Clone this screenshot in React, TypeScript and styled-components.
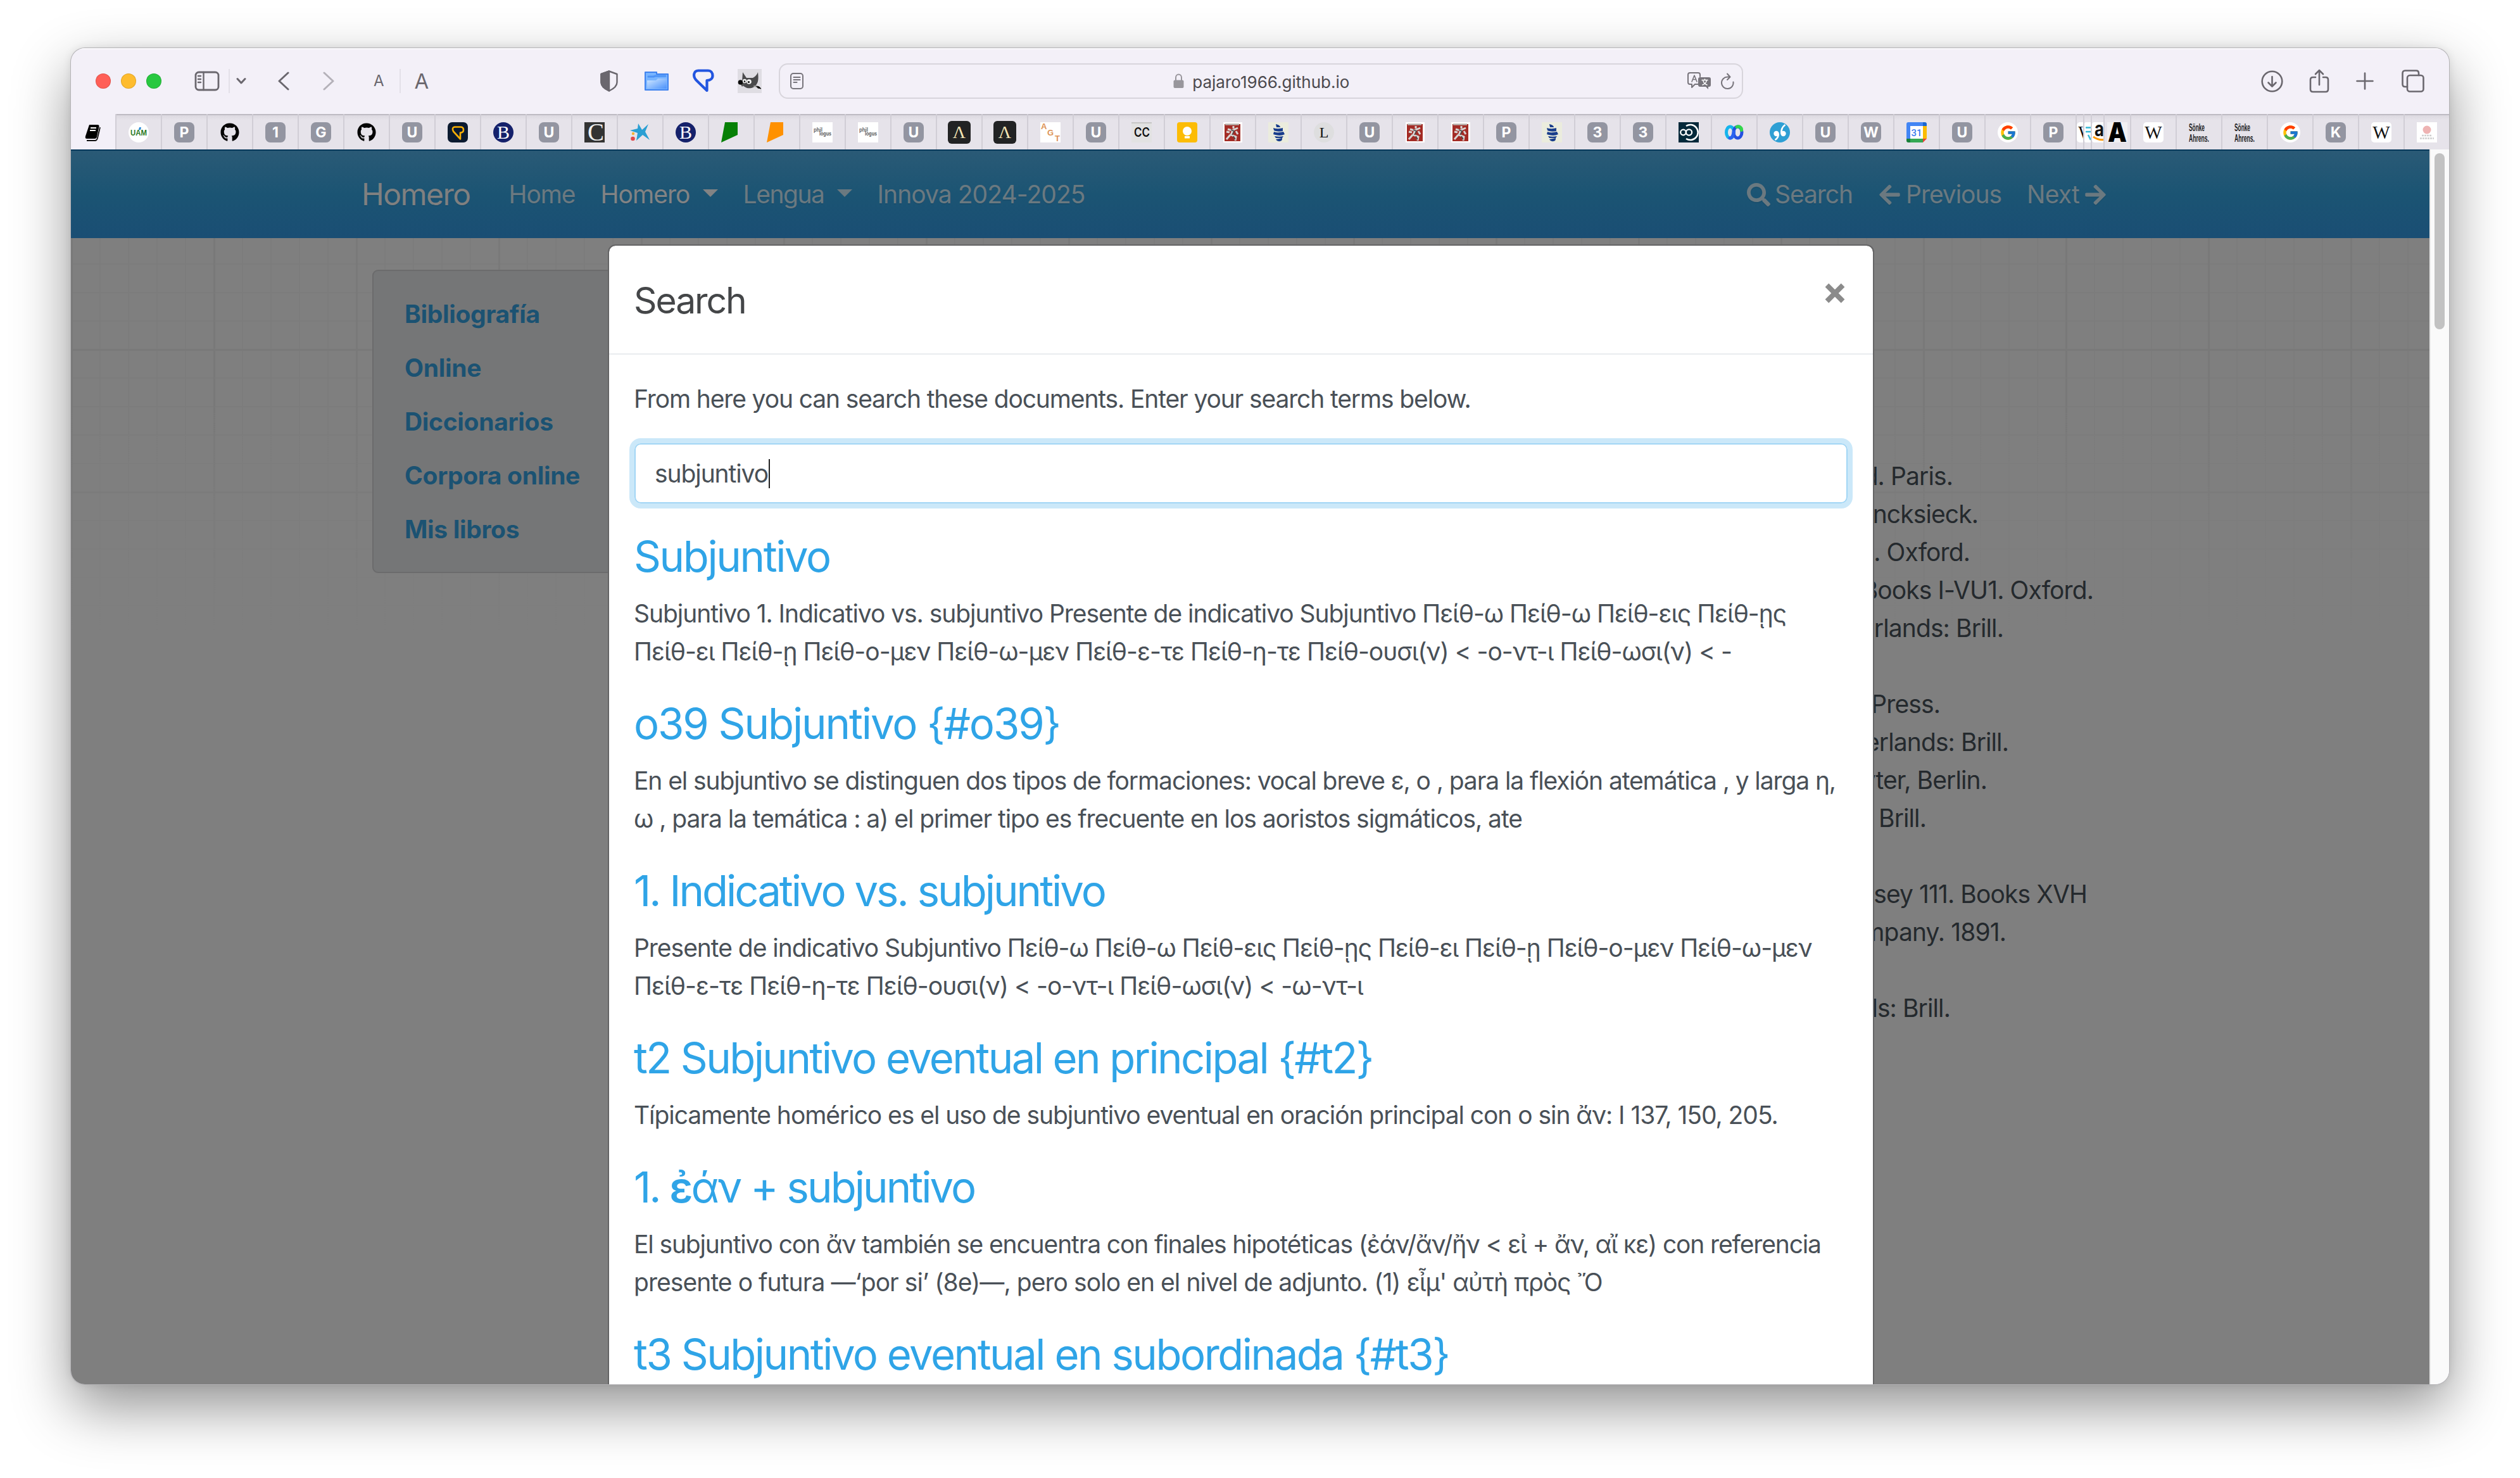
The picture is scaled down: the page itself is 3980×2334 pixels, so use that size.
import React from "react";
import styled, { createGlobalStyle } from "styled-components";
import { FaSearch, FaArrowLeft, FaArrowRight, FaGithub } from "react-icons/fa";
import { FcGoogle } from "react-icons/fc";

const GlobalStyle = createGlobalStyle`
  * { box-sizing: border-box; }
  html, body { margin: 0; padding: 0; background: #fff; }
  body { font-family: Inter, "Noto Sans", "Liberation Sans", sans-serif; overflow: hidden; }
`;

const Desktop = styled.main`
  width: 3980px;
  height: 2334px;
  padding: 76px 112px 0;
  overflow: hidden;
  background: #fff;
`;

const Window = styled.section`
  width: 3756px;
  height: 2110px;
  border-radius: 22px;
  overflow: hidden;
  display: flex;
  flex-direction: column;
  background: #f3f0f8;
  box-shadow: 0 0 0 1px #b4b3b6, 0 36px 90px rgba(0, 0, 0, 0.43), 0 0 14px rgba(0, 0, 0, 0.1);
`;

/* ---------- toolbar ---------- */
const Toolbar = styled.header`
  height: 104px;
  flex: none;
  display: flex;
  align-items: center;
  padding: 0 39px 2px 39px;
  border-top: 2px solid #fbfafd;
  color: #6a676e;
`;
const Light = styled.i<{ $c: string }>`
  width: 24px;
  height: 24px;
  border-radius: 50%;
  margin-right: 16px;
  background: ${(p) => p.$c};
  box-shadow: inset 0 0 0 1px rgba(0, 0, 0, 0.12);
`;
const Rule = styled.i<{ $l: number; $r: number }>`
  width: 2px;
  height: 38px;
  background: #e3e0e8;
  margin: 0 ${(p) => p.$r}px 0 ${(p) => p.$l}px;
`;
const Glyph = styled.svg<{ $w: number; $h: number; $l?: number; $t?: number }>`
  display: block;
  flex: none;
  width: ${(p) => p.$w}px;
  height: ${(p) => p.$h}px;
  margin-left: ${(p) => p.$l ?? 0}px;
  margin-top: ${(p) => p.$t ?? 0}px;
  fill: none;
  stroke: currentColor;
  stroke-linecap: round;
  stroke-linejoin: round;
`;
const BlueGlyph = styled(Glyph)`
  stroke: #2255e0;
`;
const Letter = styled.span<{ $s: number; $l: number }>`
  font-size: ${(p) => p.$s}px;
  line-height: 40px;
  margin-left: ${(p) => p.$l}px;
  color: #6a676e;
`;
const AddressBar = styled.div`
  width: 1523px;
  height: 56px;
  margin-left: 27px;
  border: 2px solid #d8d5dc;
  border-radius: 14px;
  display: flex;
  align-items: center;
  padding: 0 11px 0 16px;
`;
const Address = styled.div`
  flex: 1;
  display: flex;
  align-items: center;
  justify-content: center;
  gap: 13px;
  padding-left: 50px;
  color: #4b494e;
  font-size: 26px;
  line-height: 36px;
`;
const AddressText = styled.span`
  padding-top: 3px;
`;
const Trailing = styled.div`
  margin-left: auto;
  display: flex;
  align-items: center;
`;

/* ---------- favourites tab strip ---------- */
const TabStrip = styled.nav`
  height: 56px;
  flex: none;
  display: flex;
  background: #e6e3ea;
`;
const Tab = styled.div<{ $w?: number; $active?: boolean }>`
  width: ${(p) => p.$w ?? 72}px;
  flex: none;
  overflow: hidden;
  display: flex;
  align-items: center;
  justify-content: ${(p) => (p.$w && p.$w < 30 ? "flex-start" : "center")};
  padding-top: 2px;
  border-left: ${(p) => (p.$active ? 0 : 2)}px solid #d1ced6;
  background: ${(p) => (p.$active ? "#f3f0f8" : "linear-gradient(#bebbc3 0 2px, #dcd9e0 2px, #e6e3ea 10px)")};
`;
const Tile = styled.span<{ $bg: string; $fg?: string; $r?: number; $s?: number; $serif?: boolean; $box?: number; $wt?: number }>`
  width: ${(p) => p.$box ?? 32}px;
  height: ${(p) => p.$box ?? 32}px;
  flex: none;
  display: flex;
  align-items: center;
  justify-content: center;
  overflow: hidden;
  border-radius: ${(p) => p.$r ?? 8}px;
  background: ${(p) => p.$bg};
  color: ${(p) => p.$fg ?? "#fff"};
  font-family: ${(p) => (p.$serif ? '"Liberation Serif", serif' : 'Inter, "Liberation Sans", sans-serif')};
  font-size: ${(p) => p.$s ?? 23}px;
  font-weight: ${(p) => p.$wt ?? 700};
  line-height: 1;
`;
const Icon = styled.svg.attrs({ viewBox: "0 0 32 32" })`
  display: block;
  flex: none;
  width: 32px;
  height: 32px;
`;

/* ---------- page ---------- */
const Viewport = styled.div`
  flex: 1;
  min-height: 0;
  display: flex;
`;
const Page = styled.div`
  position: relative;
  width: 3725px;
  height: 1950px;
  overflow: hidden;
  background: #7f7f7f;
`;
const GridPaper = styled.div`
  position: absolute;
  inset: 140px 0 auto 0;
  height: 620px;
  background-image:
    linear-gradient(90deg, #797979 0 3px, transparent 3px),
    linear-gradient(#797979 0 3px, transparent 3px),
    linear-gradient(90deg, #7c7c7c 0 2px, transparent 2px),
    linear-gradient(#7c7c7c 0 2px, transparent 2px);
  background-size: 225px 225px, 225px 225px, 45px 45px, 45px 45px;
  background-position: 225px 0, 0 175px, 0 0, 0 -5px;
  mask-image: linear-gradient(#000 40%, transparent);
`;
const Scrollbar = styled.div`
  flex: 1;
  background: #fafafa;
  border-left: 2px solid #e8e8e8;
  padding: 6px 0 0 6px;
`;
const Thumb = styled.div`
  width: 16px;
  height: 278px;
  border-radius: 8px;
  background: #c2c2c2;
`;
const Navbar = styled.nav`
  position: relative;
  height: 140px;
  display: flex;
  align-items: center;
  padding: 0 509px 0 459px;
  border-top: 2px solid #06385a;
  background: linear-gradient(#2a5a76, #1b5473 50%, #1a4e74);
  color: #6b7980;
  font-size: 39px;
  line-height: 60px;
  text-shadow: 0 2px 0 rgba(0, 0, 0, 0.06);
  white-space: nowrap;
`;
const Brand = styled.span`
  font-size: 48px;
  color: #808080;
  margin-right: 61px;
  letter-spacing: -1.5px;
`;
const NavLink = styled.span<{ $on?: boolean; $ls: number }>`
  display: flex;
  align-items: center;
  margin-right: 40px;
  color: ${(p) => (p.$on ? "#828384" : "inherit")};
  letter-spacing: ${(p) => p.$ls}px;
`;
const Caret = styled.i`
  margin: -4px 0 0 20px;
  border: 12.5px solid transparent;
  border-top-color: currentColor;
  border-bottom: 0;
`;
const NavEnd = styled.div`
  margin-left: auto;
  display: flex;
  gap: 40px;
`;
const Action = styled.span<{ $ls: number }>`
  display: flex;
  align-items: center;
  gap: 7px;
  letter-spacing: ${(p) => p.$ls}px;
  svg { width: 37px; height: 37px; filter: drop-shadow(0 2px 0 rgba(0, 0, 0, 0.06)); }
`;
const Columns = styled.div`
  position: relative;
  display: flex;
  justify-content: space-between;
  padding: 0 517px 0 476px;
`;
const Toc = styled.aside`
  flex: none;
  width: 560px;
  height: 479px;
  margin-top: 50px;
  padding: 25px 49px;
  border: 2px solid #6b6b6c;
  border-radius: 9px;
  background: #757677;
  color: #1b5272;
  font-size: 39px;
  font-weight: 700;
  line-height: 85px;
`;
const TocItem = styled.div`
  letter-spacing: -0.32px;
`;
const References = styled.div`
  flex: none;
  margin-top: 346px;
  color: #24292d;
  font-size: 39px;
  line-height: 60px;
  text-align: right;
  letter-spacing: -0.9px;
`;
const Reference = styled.div<{ $end: number }>`
  height: 60px;
  white-space: nowrap;
  padding-right: ${(p) => 3320 - p.$end}px;
`;

/* ---------- modal ---------- */
const Modal = styled.div`
  position: absolute;
  left: 848px;
  top: 150px;
  width: 2000px;
  height: 1900px;
  border: 2px solid #656566;
  border-radius: 12px;
  background: #fff;
  background-clip: padding-box;
  color: #495057;
  font-size: 39px;
  line-height: 60px;
`;
const ModalHeader = styled.div`
  height: 172px;
  display: flex;
  justify-content: space-between;
  padding: 40px 44px 40px 39px;
  border-bottom: 2px solid #e9ecef;
`;
const ModalTitle = styled.h5`
  margin: 2px 0 0;
  color: #444648;
  font-size: 57px;
  font-weight: 400;
  line-height: 90px;
  letter-spacing: -2.1px;
`;
const ModalBody = styled.div`
  padding: 40px;
`;
const Line = styled.span<{ $ls: number }>`
  display: block;
  width: max-content;
  margin-left: -1px;
  white-space: pre;
  letter-spacing: ${(p) => p.$ls}px;
`;
const Field = styled.div`
  width: 1916px;
  height: 95px;
  margin: 40px 0;
  padding: 0 31px;
  border: 2px solid #a2d6f5;
  border-radius: 10px;
  box-shadow: 0 0 0 8px #cbe8f9;
  display: flex;
  align-items: center;
`;
const Cursor = styled.i`
  width: 2px;
  height: 46px;
  margin-left: 1px;
  background: #222;
`;
const Result = styled.article`
  margin-bottom: 40px;
`;
const ResultTitle = styled.h2<{ $ls: number }>`
  width: max-content;
  margin: 0 0 17px -1px;
  font-size: 67px;
  font-weight: 400;
  line-height: 87px;
  color: #2fa4e7;
  white-space: pre;
  letter-spacing: ${(p) => p.$ls}px;
  b { font-weight: 600; }
`;

const lt = (c: string) => <Tile $bg="#9395a1">{c}</Tile>;
const fitted = (t: string, x: number, y: number, w: number, s: number, fill: string, weight = 700, family = "Liberation Sans") => (
  <text x={x} y={y} textLength={w} lengthAdjust="spacingAndGlyphs" fontSize={s} fontWeight={weight} fontFamily={family} fill={fill}>{t}</text>
);
const github = <FaGithub size={30} color="#050505" />;
const britannica = <Tile $bg="#15216b" $r={16} $s={30} $serif $wt={400}>B</Tile>;
const phil = (
  <Icon>
    <rect width="32" height="32" fill="#fff" />
    {fitted("phil", 2, 15, 14, 9, "#666")}
    {fitted("logus", 11, 21, 19, 9, "#555")}
  </Icon>
);
const lambda = <Tile $bg="#222324" $fg="#f3e3b4" $box={36} $r={6} $s={28} $serif $wt={400}>Λ</Tile>;
const runner = (
  <Icon>
    <rect width="30" height="32" x="1" fill="#fff" />
    <rect x="3" y="3" width="25" height="27" fill="#a32b25" />
    <path d="M4 3.500h22" stroke="#b9b2ae" strokeWidth="2.500" />
    <path d="M17 6v4M8 11l7 2 9-4M16 13l-3 7 8 3-1 6M12 20l-6 7M6 15l5 1M21 14l3 5" stroke="#d8d4d2" strokeWidth="3" fill="none" />
    <path d="M13 12l5 2-3 6M17 22l3 5" stroke="#4b4a4a" strokeWidth="1.500" fill="none" />
  </Icon>
);
const ship = (
  <Icon>
    <rect width="32" height="32" fill="#ebecdd" />
    <path d="M12 3c5 1 7 3 7 5h-6zM8 9c6 2 11 1 15 0v5c-5 1-10 1-14-1zM9 15c5 2 10 1 15 0l2 4c-5 3-13 2-18 0zM10 22c5 1 9 1 14 0l-2 3H12zM12 27l10-2c1 6-7 7-10 2z" fill="#193d8c" />
  </Icon>
);
const wiki = <Tile $bg="#fff" $fg="#111" $r={5} $s={29} $serif $wt={400}>W</Tile>;
const google = <Tile $bg="#fff" $r={16}><FcGoogle size={27} /></Tile>;
const sonke = (
  <Icon>
    {fitted("Sönke", 0, 14, 25, 17, "#1d1d1f")}
    {fitted("Ahrens.", 0, 31, 32, 17, "#1d1d1f")}
  </Icon>
);
const slant = (c: string) => <Icon><path d="M6 0h20v20L0 32z" fill={c} /></Icon>;

const tabs: { w?: number; icon: React.ReactNode }[] = [
  {
    icon: (
      <Icon>
        <circle cx="16" cy="16" r="16" fill="#fff" />
        {fitted("UAM", 3, 21, 26, 12, "#2b7a25", 700)}
        <path d="M17 8l3 0-1 4-3 0z" fill="#2487d8" />
      </Icon>
    ),
  },
  { icon: lt("P") }, { icon: github }, { icon: lt("1") }, { icon: lt("G") }, { icon: github }, { icon: lt("U") },
  {
    icon: (
      <Icon>
        <rect width="32" height="32" rx="7" fill="#0b1a30" />
        <path d="M11 7.500h9q5 0 5 4.500t-5 4.500v10L9 14.500q-3-6 2-7z" fill="none" stroke="#f7ae05" strokeWidth="2.600" strokeLinejoin="round" />
      </Icon>
    ),
  },
  { icon: britannica }, { icon: lt("U") },
  {
    icon: (
      <Icon>
        <rect width="32" height="32" fill="#333" />
        {fitted("C", 5, 29, 26, 40, "#eee", 400, "Liberation Serif")}
      </Icon>
    ),
  },
  {
    icon: (
      <Icon>
        <path d="M13 2l6 10 10-9-5 12 7 13-11-8-10 9 2-12-12-4 12-3z" fill="#2a9fd3" />
        <circle cx="5" cy="18" r="2.200" fill="#f5b335" /><circle cx="4.500" cy="26" r="3.300" fill="#e0494a" />
      </Icon>
    ),
  },
  { icon: britannica }, { icon: slant("#068006") }, { icon: slant("#ff9100") }, { icon: phil }, { icon: phil }, { icon: lt("U") },
  { icon: lambda }, { icon: lambda },
  {
    icon: (
      <Icon>
        <rect width="32" height="32" fill="#fff" />
        <g fill="#dd9457" fontFamily="Liberation Sans" fontWeight="700" fontSize="13">
          <text x="1" y="11">A</text><text x="11" y="21">G</text><text x="23" y="30">T</text>
        </g>
      </Icon>
    ),
  },
  { icon: lt("U") },
  {
    icon: (
      <Icon>
        <rect width="32" height="32" fill="#e2e2e2" /><rect width="32" height="2" fill="#c6c6c6" />
        {fitted("CC", 4, 23, 25, 20, "#111", 600, "Inter")}
      </Icon>
    ),
  },
  {
    icon: (
      <Icon>
        <rect width="32" height="32" rx="4" fill="#fcbc05" />
        <circle cx="16" cy="14" r="7" fill="#fff" /><path d="M12 17h8v3h-8zM12 22h8v3.500h-8z" fill="#fff" />
      </Icon>
    ),
  },
  { icon: runner }, { icon: ship },
  { icon: <Tile $bg="#dededf" $fg="#111" $r={16} $s={24} $serif $wt={400}>L</Tile> },
  { icon: lt("U") }, { icon: runner }, { icon: runner }, { icon: lt("P") }, { icon: ship }, { icon: lt("3") }, { icon: lt("3") },
  {
    icon: (
      <Icon>
        <rect width="32" height="32" fill="#04293a" />
        <path d="M12 6a12 12 0 1 1 0 20" fill="none" stroke="#fff" strokeWidth="2.500" />
        <circle cx="7.500" cy="16" r="4.300" fill="none" stroke="#fff" strokeWidth="2.300" />
        <circle cx="16.500" cy="16" r="4.600" fill="none" stroke="#fff" strokeWidth="2.300" />
      </Icon>
    ),
  },
  {
    icon: (
      <Icon>
        <ellipse cx="9.500" cy="16" rx="6" ry="9" fill="none" stroke="#16b4ec" strokeWidth="5" />
        <ellipse cx="21.500" cy="16" rx="6.500" ry="9" fill="none" stroke="#2450e0" strokeWidth="5" />
        <path d="M9 25c5 0 5-6 6.500-10" fill="none" stroke="#2a62f0" strokeWidth="5" strokeLinecap="round" />
        <path d="M20 7.500c4-2 8 1 7.500 5" fill="none" stroke="#33d64c" strokeWidth="5" strokeLinecap="round" />
      </Icon>
    ),
  },
  {
    icon: (
      <Icon>
        <circle cx="16" cy="16" r="16" fill="#2e9fd4" />
        <circle cx="10.500" cy="18" r="4.200" fill="#fff" /><circle cx="21.500" cy="18" r="4.200" fill="#fff" />
        <path d="M13.500 18q1 6-5 10M18.500 18q-1-9 6-14" fill="none" stroke="#fff" strokeWidth="2.600" />
      </Icon>
    ),
  },
  { icon: lt("U") }, { icon: lt("W") },
  {
    icon: (
      <Icon>
        <path d="M3 0h23v6H6v20H0V3q0-3 3-3z" fill="#4285f4" /><path d="M26 0h3q3 0 3 3v3h-6z" fill="#1967d2" />
        <path d="M26 6h6v20h-6z" fill="#fbbc04" /><path d="M6 26h20v6H6z" fill="#34a853" />
        <path d="M0 26h6v6H3q-3 0-3-3z" fill="#188038" /><path d="M26 26h6l-6 6z" fill="#ea4335" />
        <path d="M6 6h20v20H6z" fill="#fff" />
        <text x="16" y="21.500" textAnchor="middle" fontFamily="Roboto" fontWeight="500" fontSize="15" fill="#3b7ded">31</text>
      </Icon>
    ),
  },
  { icon: lt("U") }, { icon: google }, { icon: lt("P") },
  { w: 12, icon: wiki },
  {
    w: 12,
    icon: (
      <Icon>
        <rect width="32" height="32" rx="3" fill="#fff" />
        <path d="M2 8.500h22M2 15h22M6 20l4 8" stroke="#37b9d6" strokeWidth="2.500" />
      </Icon>
    ),
  },
  {
    w: 20,
    icon: (
      <Icon>
        <rect width="32" height="32" rx="4" fill="#fff" />
        {fitted("a", 4, 22, 15, 33, "#111", 700, "Inter")}
        <path d="M2 23q13 9 26 1" fill="none" stroke="#ff9a0a" strokeWidth="3" />
      </Icon>
    ),
  },
  {
    w: 42,
    icon: (
      <Icon>
        <rect width="32" height="32" fill="#f1f0f3" />
        {fitted("A", 1, 31, 30, 42, "#000", 900, "Inter")}
      </Icon>
    ),
  },
  { icon: wiki }, { icon: sonke }, { icon: sonke }, { icon: google }, { icon: lt("K") }, { icon: wiki },
  {
    icon: (
      <Icon>
        <rect width="32" height="32" fill="#fff" /><circle cx="16" cy="12" r="6.500" fill="#eeb3b3" />
        <path d="M8 21h16M5 25.500h22" stroke="#cfcfcf" strokeWidth="2.500" strokeDasharray="3 1" />
      </Icon>
    ),
  },
];

const results: { title: React.ReactNode; ls: number; lines: [string, number][] }[] = [
  { title: "Subjuntivo", ls: -2.4, lines: [
    ["Subjuntivo 1. Indicativo vs. subjuntivo Presente de indicativo Subjuntivo Πείθ-ω Πείθ-ω Πείθ-εις Πείθ-ῃς", -1.05],
    ["Πείθ-ει Πείθ-ῃ Πείθ-ο-μεν Πείθ-ω-μεν Πείθ-ε-τε Πείθ-η-τε Πείθ-ουσι(ν) < -ο-ντ-ι Πείθ-ωσι(ν) < -", -0.995]] },
  { title: "o39 Subjuntivo {#o39}", ls: -2.1, lines: [
    ["En el subjuntivo se distinguen dos tipos de formaciones: vocal breve ε, ο , para la flexión atemática , y larga η,", -1.105],
    ["ω , para la temática : a) el primer tipo es frecuente en los aoristos sigmáticos, ate", -1.06]] },
  { title: "1. Indicativo vs. subjuntivo", ls: -2.99, lines: [
    ["Presente de indicativo Subjuntivo Πείθ-ω Πείθ-ω Πείθ-εις Πείθ-ῃς Πείθ-ει Πείθ-ῃ Πείθ-ο-μεν Πείθ-ω-μεν", -1.035],
    ["Πείθ-ε-τε Πείθ-η-τε Πείθ-ουσι(ν) < -ο-ντ-ι Πείθ-ωσι(ν) < -ω-ντ-ι", -0.95]] },
  { title: "t2 Subjuntivo eventual en principal {#t2}", ls: -2.59, lines: [
    ["Típicamente homérico es el uso de subjuntivo eventual en oración principal con o sin ἄν: I 137, 150, 205.", -1.055]] },
  { title: <>1. <b>ἐ</b>άν + subjuntivo</>, ls: -2.95, lines: [
    ["El subjuntivo con ἄν también se encuentra con finales hipotéticas (ἐάν/ἄν/ἤν < εἰ + ἄν, αἴ κε) con referencia", -1.14],
    ["presente o futura —‘por si’ (8e)—, pero solo en el nivel de adjunto. (1) εἶμ' αὐτὴ πρὸς Ὄ", -0.94]] },
  { title: "t3 Subjuntivo eventual en subordinada {#t3}", ls: -2.49, lines: [] },
];

const toc = ["Bibliografía", "Online", "Diccionarios", "Corpora online", "Mis libros"];

const references: [string, number][] = [
  ["d. Paris.", 3084], ["incksieck.", 3124], ["l. Oxford.", 3111], ["Books I-VU1. Oxford.", 3306], ["erlands: Brill.", 3164], ["", 3320],
  ["Press.", 3064], ["erlands: Brill.", 3172], ["yter, Berlin.", 3138], ["Brill.", 3042], ["", 3320],
  ["sey 111. Books XVH", 3296], ["mpany. 1891.", 3168], ["", 3320], ["ds: Brill.", 3080],
];

export default function App() {
  return (
    <Desktop>
      <GlobalStyle />
      <Window>
        <Toolbar>
          <Light $c="#ff5f57" /><Light $c="#febc2e" /><Light $c="#28c840" />
          <Glyph $w={40} $h={32} $l={36} viewBox="0 0 40 32" strokeWidth="2.800">
            <rect x="2" y="2" width="36" height="28" rx="5" /><path d="M14.500 2v28M6 8h4M6 13h4M6 18h4" strokeWidth="2.400" />
          </Glyph>
          <Rule $l={14} $r={10} />
          <Glyph $w={16} $h={12} viewBox="0 0 16 12" strokeWidth="3"><path d="M2 2.500l6 6.500 6-6.500" /></Glyph>
          <Glyph $w={18} $h={30} $l={50} viewBox="0 0 18 30" strokeWidth="3"><path d="M16 2L2 15l14 13" /></Glyph>
          <Glyph $w={18} $h={30} $l={53} viewBox="0 0 18 30" strokeWidth="3" opacity=".45"><path d="M2 2l14 13L2 28" /></Glyph>
          <Letter $s={24} $l={62}>A</Letter>
          <Rule $l={24} $r={0} />
          <Letter $s={33} $l={22}>A</Letter>
          <Glyph $w={28} $h={34} $l={271} viewBox="0 0 28 34" strokeWidth="2.400">
            <path d="M14 1.500L26.500 6v13c0 6-6 10.500-12.500 13.500C7.500 29.500 1.500 25 1.500 19V6z" />
            <path d="M14 1.500v31C7.500 29.500 1.500 25 1.500 19V6z" fill="currentColor" />
          </Glyph>
          <Glyph $w={38} $h={30} $l={42} viewBox="0 0 38 30" strokeWidth="2">
            <defs><linearGradient id="fold" x1="0" y1="0" x2="1" y2="1"><stop offset="0" stopColor="#d3e9ff" /><stop offset="1" stopColor="#4b92fb" /></linearGradient></defs>
            <path d="M1 1h18v3h18v25H1z" fill="#79b5ff" stroke="#3f82ee" />
            <path d="M4 14h14l3-3h14v16H4z" fill="url(#fold)" stroke="none" /><path d="M6 8h8l3-1h16" stroke="#4d93f6" strokeWidth="3" />
          </Glyph>
          <BlueGlyph $w={34} $h={38} $l={38} viewBox="0 0 34 38" strokeWidth="4.200">
            <path d="M9 2.500h15c5 0 7.500 3.500 7.500 8S28 18 22.500 18V34L6.500 18.500C-1 11 2 2.500 9 2.500z" />
          </BlueGlyph>
          <Glyph $w={38} $h={38} $l={37} viewBox="0 0 38 38">
            <path d="M0 0h38v38H0z" fill="#dfdde3" stroke="none" />
            <path d="M8 5l6 9h10c4-2 7-6 8-9 1 8 1 15-2 19-4 7-14 8-19 4-4-2-5-5-4-8z" fill="#4a4a4c" stroke="none" />
            <path d="M2 19l10 4-5 5z" fill="#555" stroke="none" />
            <circle cx="4.500" cy="21" r="3.800" fill="#0c0c0c" stroke="none" />
            <circle cx="11" cy="19" r="3.200" fill="#eee" stroke="none" /><circle cx="18" cy="20" r="3.800" fill="#f4f4f4" stroke="none" />
            <circle cx="11" cy="19.500" r="1.300" fill="#111" stroke="none" /><circle cx="17.500" cy="20.500" r="1.600" fill="#111" stroke="none" />
            <path d="M26 27l5 1" stroke="#999" strokeWidth="2" /><path d="M30 27l4 1 3 3-5-1z" fill="#111" stroke="#111" />
          </Glyph>
          <AddressBar>
            <Glyph $w={21} $h={26} viewBox="0 0 21 26" strokeWidth="2" color="#77747b">
              <rect x="1" y="1" width="19" height="24" rx="4" /><path d="M5.500 7h10M5.500 11h10M5.500 15h5" />
            </Glyph>
            <Address>
              <Glyph $w={17} $h={24} viewBox="0 0 17 24" color="#98969c" strokeWidth="2">
                <path d="M4 11V6.500a4.500 5 0 0 1 9 0V11" /><rect x="0.500" y="10.500" width="16" height="12.500" rx="2" fill="currentColor" stroke="none" />
              </Glyph>
              <AddressText>pajaro1966.github.io</AddressText>
            </Address>
            <Glyph $w={38} $h={28} viewBox="0 0 38 28" color="#77747b" strokeWidth="2">
              <path d="M17 19h-5l-5 5v-5H4q-3 0-3-3V4q0-3 3-3h13q3 0 3 3v3" />
              <path d="M7 15l4-10 4 10M8.500 11.500h5" strokeWidth="1.600" />
              <path d="M20 8h14q3 0 3 3v9q0 3-3 3h-1v4l-4-4h-9q-3 0-3-3v-9q0-3 3-3z" fill="currentColor" stroke="none" />
              <path d="M23 12.500h9M27.500 11v1.500M24 20c3-1 6-4 6.500-7.500M25 14c1 3 3 5 6 6" stroke="#fff" strokeWidth="1.500" />
            </Glyph>
            <Glyph $w={23} $h={27} $l={14} viewBox="0 0 23 27" color="#77747b" strokeWidth="2">
              <path d="M20.500 14.500A9.300 9.300 0 1 1 11.500 6.500h3.500M11 1.500l4.500 5L11 11" />
            </Glyph>
          </AddressBar>
          <Trailing>
            <Glyph $w={35} $h={35} viewBox="0 0 35 35" strokeWidth="2.600">
              <circle cx="17.500" cy="17.500" r="15.800" /><path d="M17.500 10v15M11.500 19.500l6 6 6-6" />
            </Glyph>
            <Glyph $w={32} $h={38} $l={41} viewBox="0 0 32 38" strokeWidth="2.600">
              <path d="M10 13H6q-4 0-4 4v15q0 4 4 4h20q4 0 4-4V17q0-4-4-4h-4M16 25V2M10 8l6-6 6 6" />
            </Glyph>
            <Glyph $w={28} $h={28} $l={42} viewBox="0 0 28 28" strokeWidth="2.600"><path d="M14 1.500v25M1.500 14h25" /></Glyph>
            <Glyph $w={36} $h={36} $l={44} viewBox="0 0 36 36" strokeWidth="2.600">
              <rect x="9" y="9" width="25.500" height="25.500" rx="4" /><path d="M9 27H5.500Q1.500 27 1.500 23V6q0-4.500 4-4.500H23q4 0 4 4V9" />
            </Glyph>
          </Trailing>
        </Toolbar>

        <TabStrip>
          <Tab $w={70} $active>
            <svg width="28" height="28" viewBox="0 0 28 28">
              <path d="M8 2h13q3 0 2.500 3L20 21q-.500 3-3.500 3H4q-3 0-2-4z" fill="#000" />
              <path d="M25 6l-4 17q-1 4-4 4H4" fill="none" stroke="#111" strokeWidth="1.800" />
              <path d="M10 7h9M9 11h9" stroke="#fff" strokeWidth="1.800" />
            </svg>
          </Tab>
          {tabs.map((t, i) => <Tab key={i} $w={t.w}>{t.icon}</Tab>)}
        </TabStrip>

        <Viewport>
          <Page>
            <GridPaper />
            <Navbar>
              <Brand>Homero</Brand>
              <NavLink $ls={-1.07}>Home</NavLink>
              <NavLink $on $ls={-0.95}>Homero<Caret /></NavLink>
              <NavLink $ls={-1.45}>Lengua<Caret /></NavLink>
              <NavLink $ls={-0.94}>Innova 2024-2025</NavLink>
              <NavEnd>
                <Action $ls={-1.07}><FaSearch />Search</Action>
                <Action $ls={-1.04}><FaArrowLeft />Previous</Action>
                <Action $ls={-0.77}>Next<FaArrowRight /></Action>
              </NavEnd>
            </Navbar>
            <Columns>
              <Toc>{toc.map((t) => <TocItem key={t}>{t}</TocItem>)}</Toc>
              <References>
                {references.map(([t, end], i) => <Reference key={i} $end={end}>{t}</Reference>)}
              </References>
            </Columns>
            <Modal>
              <ModalHeader>
                <ModalTitle>Search</ModalTitle>
                <Glyph $w={32} $h={32} $t={19} viewBox="2 2 28 28" color="#8b8b8b" strokeWidth="7">
                  <path d="M5 5l22 22M27 5L5 27" strokeLinecap="butt" />
                </Glyph>
              </ModalHeader>
              <ModalBody>
                <Line $ls={-1.135}>From here you can search these documents. Enter your search terms below.</Line>
                <Field><Line $ls={-1.083}>subjuntivo</Line><Cursor /></Field>
                {results.map((r, i) => (
                  <Result key={i}>
                    <ResultTitle $ls={r.ls}>{r.title}</ResultTitle>
                    {r.lines.map(([t, ls]) => <Line key={t} $ls={ls}>{t}</Line>)}
                  </Result>
                ))}
              </ModalBody>
            </Modal>
          </Page>
          <Scrollbar><Thumb /></Scrollbar>
        </Viewport>
      </Window>
    </Desktop>
  );
}
